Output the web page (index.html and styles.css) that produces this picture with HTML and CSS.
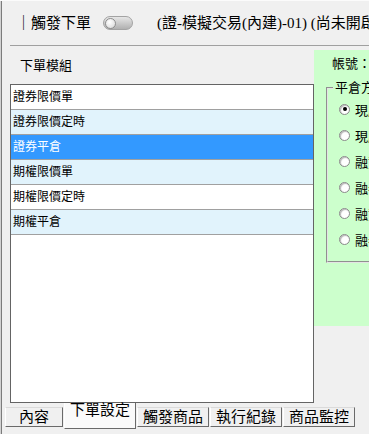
FILE: index.html
```html
<!DOCTYPE html>
<html lang="zh-Hant">
<head>
    <meta charset="UTF-8">
    <meta name="viewport" content="width=device-width, initial-scale=1.0">
    <title>觸發下單</title>
    <link rel="stylesheet" href="styles.css">
</head>
<body>
    <div class="frame">
        <!-- 上方工具列 -->
        <div class="toolbar">
            <span class="trigger-label">｜觸發下單</span>
            <span class="switch"><span class="knob"></span></span>
            <span class="account-title">(證-模擬交易(內建)-01) (尚未開啟)</span>
        </div>
        <div class="rule"></div>

        <div class="content">
            <!-- 下單模組 -->
            <div class="module-pane">
                <div class="pane-title">下單模組</div>
                <ul class="module-list">
                    <li>證券限價單</li>
                    <li class="alt">證券限價定時</li>
                    <li class="selected">證券平倉</li>
                    <li class="alt">期權限價單</li>
                    <li>期權限價定時</li>
                    <li class="alt">期權平倉</li>
                </ul>
            </div>

            <!-- 下單設定 -->
            <div class="settings-pane">
                <div class="account-row">帳號：</div>
                <fieldset class="close-group">
                    <legend>平倉方式</legend>
                    <label class="radio-row"><span class="radio checked"></span>現股賣出</label>
                    <label class="radio-row"><span class="radio"></span>現股當沖</label>
                    <label class="radio-row"><span class="radio"></span>融資賣出</label>
                    <label class="radio-row"><span class="radio"></span>融券買進</label>
                    <label class="radio-row"><span class="radio"></span>融資當沖</label>
                    <label class="radio-row"><span class="radio"></span>融券當沖</label>
                </fieldset>
            </div>
        </div>

        <!-- 分頁 -->
        <div class="tabs">
            <span class="tab tab-first">內容</span>
            <span class="tab active">下單設定</span>
            <span class="tab">觸發商品</span>
            <span class="tab">執行紀錄</span>
            <span class="tab">商品監控</span>
        </div>
    </div>
</body>
</html>
```

FILE: styles.css
```css
* {
    margin: 0;
    padding: 0;
    box-sizing: border-box;
}

html, body {
    width: 369px;
    height: 434px;
    overflow: hidden;
}

body {
    background-color: #f0f0f0;
    font-family: "Liberation Serif", "Noto Sans CJK TC", serif;
    color: #000;
}

.frame {
    width: 369px;
    height: 434px;
    overflow: hidden;
    padding: 1px 0 0 2px;
    box-shadow: inset 0 1px #fbfbfb, inset 1px 0 #d2d2d2, inset 2px 0 #7c7c7c;
}

/* Toolbar */
.toolbar {
    height: 44px;
    display: flex;
    align-items: center;
    padding-left: 14px;
    font-size: 15px;
    line-height: 18px;
    white-space: nowrap;
}

.switch {
    flex: none;
    display: flex;
    align-items: center;
    margin-left: 12px;
    width: 30px;
    height: 14px;
    padding-left: 1px;
    border: 1px solid #a3a3a3;
    border-radius: 7px;
    background: linear-gradient(#e6e6e6, #b0b0b0);
}

.knob {
    width: 11px;
    height: 11px;
    border-radius: 50%;
    border: 1px solid #8e8e8e;
    background: radial-gradient(circle at 40% 35%, #ffffff, #d6d6d6);
}

.account-title {
    margin-left: 24px;
}

.rule {
    margin-left: 8px;
    border-top: 1px solid #a0a0a0;
}

/* Content */
.content {
    display: flex;
    height: 357px;
}

.module-pane {
    flex: 0 0 312px;
    padding-left: 8px;
}

.pane-title {
    height: 38px;
    padding: 12px 0 0 10px;
    font-size: 13px;
    line-height: 16px;
}

.module-list {
    list-style: none;
    width: 304px;
    height: 319px;
    border: 1px solid #646464;
    background-color: #fff;
    font-size: 12px;
}

.module-list li {
    height: 25px;
    line-height: 24px;
    padding-left: 2px;
    border-bottom: 1px solid #a0a0a0;
}

.module-list .alt {
    background-color: #e1f3fc;
}

.module-list .selected {
    background-color: #3399ff;
    color: #fff;
}

/* Settings */
.settings-pane {
    flex: 0 0 230px;
    height: 276px;
    margin-top: 4px;
    padding-left: 12px;
    background-color: #ccffcc;
}

.account-row {
    padding: 6px 0 0 6px;
    font-size: 13px;
    line-height: 16px;
}

.close-group {
    margin-top: 8px;
    padding: 0 0 9px 5px;
    border: 2px groove #e4e4e4;
    font-size: 13px;
}

.close-group legend {
    padding: 0 2px;
    line-height: 16px;
}

.radio-row {
    display: flex;
    align-items: center;
    gap: 5px;
    height: 26px;
    padding-left: 6px;
    white-space: nowrap;
}

.radio {
    flex: none;
    display: flex;
    align-items: center;
    justify-content: center;
    width: 11px;
    height: 11px;
    border-radius: 50%;
    border: 1px solid #8a8a8a;
    background-color: #fff;
    box-shadow: inset 1px 1px 1px #b8b8b8;
}

.radio.checked::after {
    content: "";
    width: 4px;
    height: 4px;
    border-radius: 50%;
    background-color: #000;
}

/* Tabs */
.tabs {
    display: flex;
    align-items: flex-start;
    gap: 1px;
    height: 31px;
    padding-left: 3px;
    font-size: 15px;
    white-space: nowrap;
}

.tab {
    width: 72px;
    height: 20px;
    margin-top: 4px;
    line-height: 18px;
    text-align: center;
    border: 1px solid;
    border-color: #dadada #6a6a6a #6a6a6a #ffffff;
    background-color: #f0f0f0;
}

.tab-first {
    width: 58px;
}

.tab.active {
    height: 26px;
    margin-top: 0;
    line-height: 15px;
    border-top: none;
    background-color: #fafafa;
}
```
